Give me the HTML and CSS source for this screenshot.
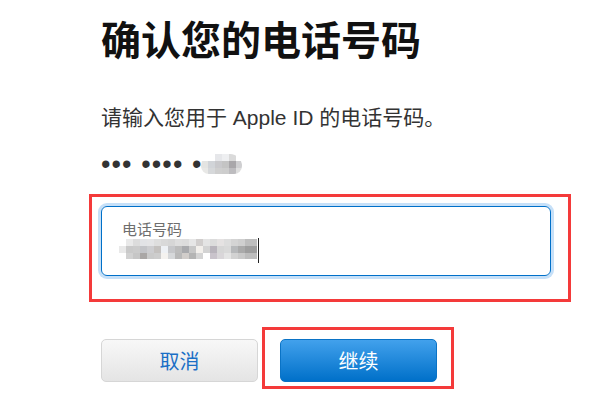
FILE: index.html
```html
<!DOCTYPE html>
<html lang="zh-CN">
<head>
<meta charset="utf-8">
<title>确认您的电话号码</title>
<link rel="stylesheet" href="styles.css">
</head>
<body>
<main class="page">
  <h1 class="title">确认您的电话号码</h1>
  <p class="intro">请输入您用于 Apple ID 的电话号码。</p>
  <div class="masked">
    <span class="dots">••• •••• •</span><span class="blur blur-small"></span>
  </div>
  <div class="mark mark-field">
    <div class="field">
      <span class="field-label">电话号码</span>
      <div class="field-value"><span class="blur blur-value"></span><span class="caret"></span></div>
    </div>
  </div>
  <div class="actions">
    <button class="btn btn-cancel" type="button">取消</button>
    <div class="mark mark-btn">
      <button class="btn btn-primary" type="button">继续</button>
    </div>
  </div>
</main>
</body>
</html>
```
FILE: styles.css
```css
* { box-sizing: border-box; }
html, body { margin: 0; padding: 0; background: #fff; }
body {
  font-family: "Liberation Sans", "Noto Sans CJK SC", sans-serif;
  color: #333;
  width: 600px;
  height: 400px;
  overflow: hidden;
}
.page {
  padding: 14px 0 0 101px;
}
.title {
  margin: 0;
  font-family: "Noto Sans CJK SC", sans-serif;
  font-weight: 700;
  font-size: 40px;
  line-height: 48px;
  color: #111;
  letter-spacing: 0;
}
.intro {
  margin: 42px 0 0;
  font-size: 21px;
  line-height: 28px;
  color: #333;
}
.masked {
  margin-top: 20px;
  height: 24px;
  display: flex;
  align-items: center;
}
.dots {
  font-family: "Liberation Sans", sans-serif;
  font-size: 27px;
  line-height: 24px;
  letter-spacing: 1.1px;
  color: #333;
}
.blur { display: inline-block; }
.blur-small {
  width: 41px;
  height: 20px;
  margin-left: -2px;
  border-radius: 10px 12px 8px 8px / 12px 12px 8px 8px;
  background:
    linear-gradient(90deg, #fff 0 14px, #e6e7ea 14px 21px, #eeeff1 21px 28px, #dadada 28px 35px, #fff 35px) 0 0 / 100% 7px no-repeat,
    linear-gradient(90deg, #e4e4e2 0 7px, #d1d4d8 7px 14px, #c9c9cc 14px 21px, #c4c4c4 21px 28px, #a9a7aa 28px 35px, #cfcfd1 35px) 0 7px / 100% 7px no-repeat,
    linear-gradient(90deg, #e8e8e6 0 7px, #d6d8da 7px 14px, #cfcfcf 14px 21px, #cdcdcd 21px 28px, #bdbcbf 28px 35px, #dedede 35px) 0 14px / 100% 6px no-repeat;
}
.mark {
  border: 3px solid #f43a3a;
}
.mark-field {
  margin: 18px 0 0 -12px;
  width: 482px;
  padding: 9px 17px 23px 9px;
}
.field {
  height: 70px;
  border: 1px solid #0070c9;
  border-radius: 6px;
  box-shadow: 0 0 0 3px #c6e0f8;
  padding: 14px 0 0 20px;
  display: flex;
  flex-direction: column;
}
.field-label {
  font-family: "Noto Sans CJK SC", sans-serif;
  font-size: 15px;
  line-height: 16px;
  color: #6e6e6e;
  height: 16px;
}
.field-value {
  margin-top: 1px;
  margin-left: -3px;
  display: flex;
  align-items: flex-start;
  height: 26px;
}
.blur-value {
  width: 138px;
  height: 20px;
  margin-top: 1px;
  background:
    linear-gradient(90deg, #fff 0 7px, #e9e9e9 7px 14px, #dcdcdc 14px 21px, #e2e3e6 21px 28px, #e4e4e6 28px 35px, #dedede 35px 42px, #d9d9d9 42px 49px, #d6d6d6 49px 56px, #dedede 56px 63px, #dcdcdc 63px 70px, #e6e6e6 70px 77px, #d1cecd 77px 84px, #e4e4e4 84px 91px, #dcdcdc 91px 98px, #e5e2e2 98px 105px, #ddd 105px 112px, #d4d4d4 112px 119px, #cfcfcf 119px 126px, #bebebe 126px) 0 0 / 100% 7px no-repeat,
    linear-gradient(90deg, #e9e9e9 0 7px, #c9c9c9 7px 14px, #cbcbcb 14px 21px, #c3c4c8 21px 28px, #cdcdd0 28px 35px, #c4c1bf 35px 42px, #eef1f5 42px 49px, #c6c7ca 49px 56px, #bcbcbc 56px 63px, #a9aaad 63px 70px, #c7c7c7 70px 77px, #f3f0ec 77px 84px, #d3d3d3 84px 91px, #b9b4bc 91px 98px, #d6d6d6 98px 105px, #d9d9d9 105px 112px, #b7b9bb 112px 119px, #aaa 119px 126px, #9e9e9e 126px) 0 7px / 100% 7px no-repeat,
    linear-gradient(90deg, #fff 0 7px, #d1d1d1 7px 14px, #c6c6c6 14px 21px, #aaa7a6 21px 28px, #cacaca 28px 35px, #cdcdcd 35px 42px, #f4f2ef 42px 49px, #d6d8da 49px 56px, #b9b9b9 56px 63px, #d1cdca 63px 70px, #b4b4b4 70px 77px, #d4d4d4 77px 84px, #fff 84px 91px, #c9c3cb 91px 98px, #d9d6d9 98px 105px, #e4e4e4 105px 112px, #d2d2d2 112px 119px, #c9c9c9 119px 126px, #bdbdbd 126px) 0 14px / 100% 6px no-repeat;
}
.caret {
  display: inline-block;
  width: 1px;
  height: 25px;
  background: #222;
  margin-left: 1px;
}
.actions {
  margin-top: 25px;
  display: flex;
  align-items: flex-start;
}
.btn {
  width: 157px;
  height: 43px;
  border-radius: 5px;
  font-family: "Noto Sans CJK SC", sans-serif;
  font-size: 20px;
  line-height: 24px;
  padding: 0;
  cursor: pointer;
}
.btn-cancel {
  margin-top: 12px;
  background: linear-gradient(#f8f8f8, #e4e4e4);
  border: 1px solid #d6d6d6;
  color: #1a6fc6;
}
.mark-btn {
  margin-left: 4px;
  padding: 9px 14px 4px 15px;
}
.btn-primary {
  background: linear-gradient(#42a1ec, #0070c9);
  border: 1px solid #0a73c6;
  color: #fff;
}
```
